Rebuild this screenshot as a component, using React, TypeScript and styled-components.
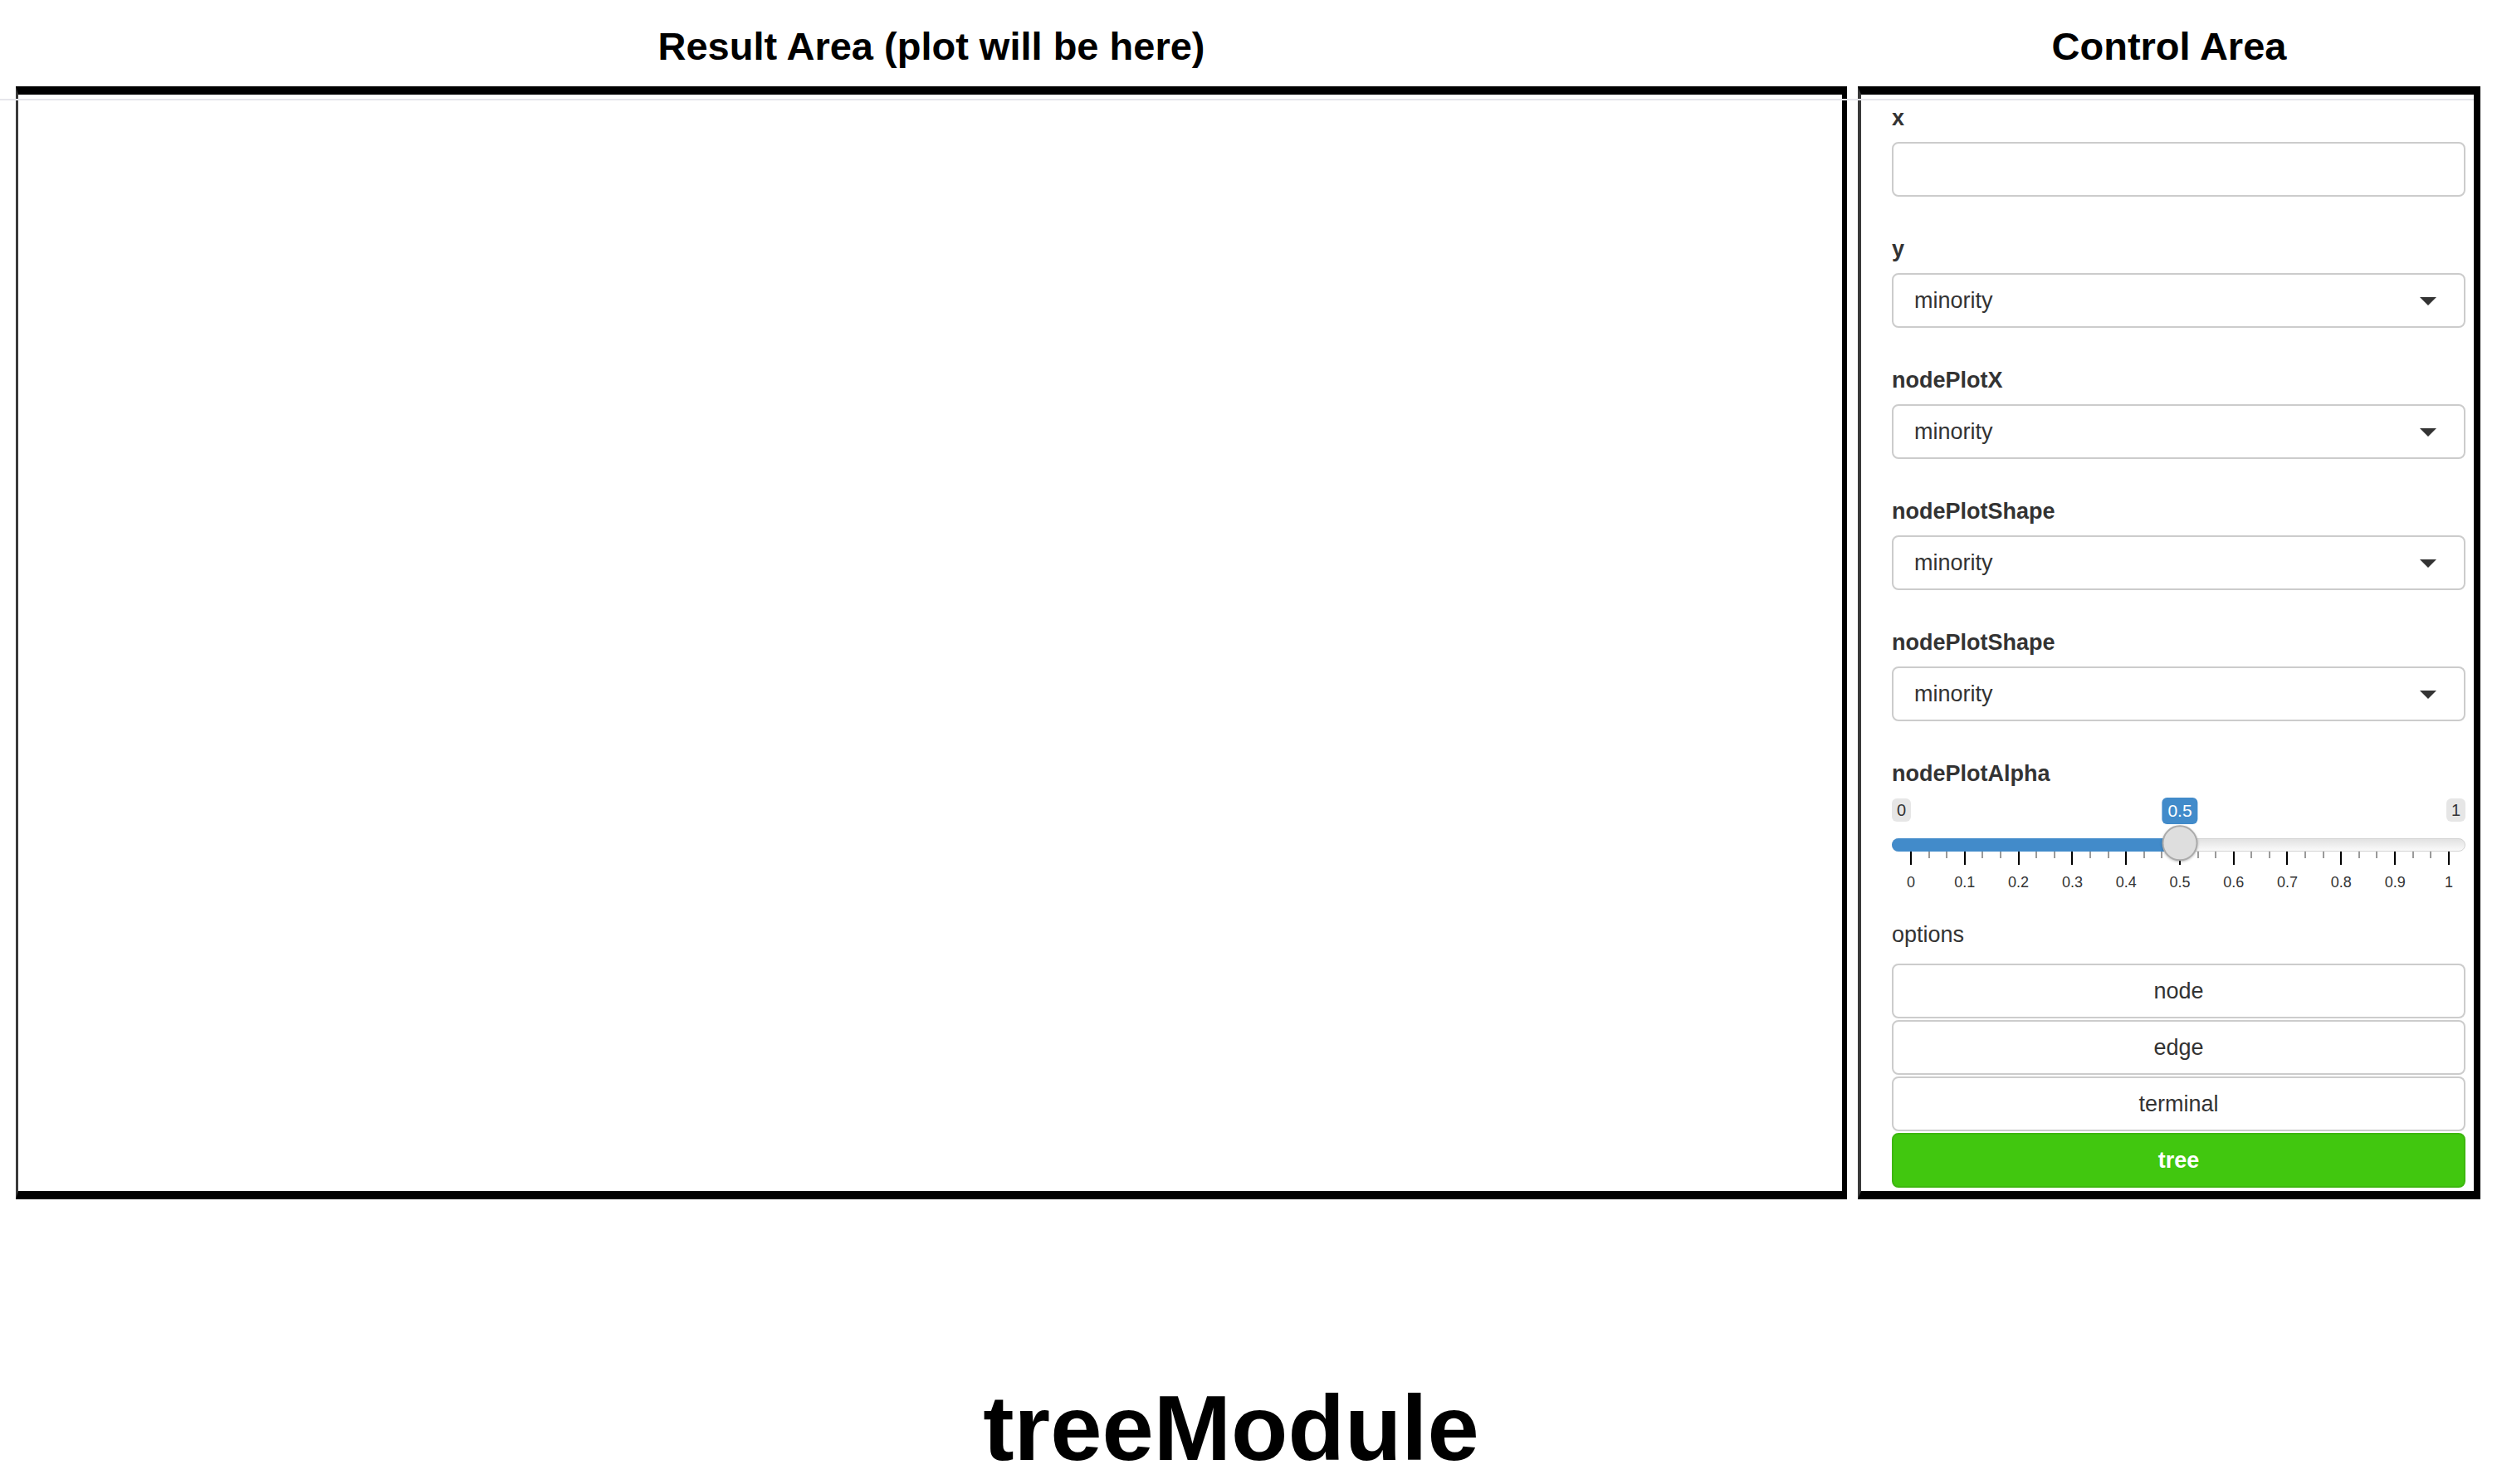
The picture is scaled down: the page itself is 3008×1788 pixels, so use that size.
import React from "react";
import styled, { createGlobalStyle } from "styled-components";

const GlobalStyle = createGlobalStyle`
  html, body {
    margin: 0;
    padding: 0;
    background: #fff;
  }
  body {
    font-family: "Liberation Sans", Arial, Helvetica, sans-serif;
    color: #333;
  }
  * {
    box-sizing: border-box;
  }
`;

const selectFields = ["y", "nodePlotX", "nodePlotShape", "nodePlotShape"];
const options = ["node", "edge", "terminal", "tree"];
const activeOption = "tree";
const alpha = 0.5;
const tickLabels = ["0", "0.1", "0.2", "0.3", "0.4", "0.5", "0.6", "0.7", "0.8", "0.9", "1"];

const Page = styled.div`
  width: 3008px;
  height: 1788px;
  display: flex;
  flex-direction: column;
  overflow: hidden;
`;

const Headers = styled.div`
  display: flex;
  gap: 13px;
  height: 104px;
  padding: 29px 20px 0 19px;
`;

const HeadTitle = styled.h3<{ $width: number }>`
  flex: 0 0 ${(p) => p.$width}px;
  margin: 0;
  text-align: center;
  font-size: 47px;
  line-height: 53px;
  font-weight: bold;
  color: #000;
`;

const Row = styled.div`
  position: relative;
  display: flex;
  gap: 13px;
  padding: 0 20px 0 19px;

  &::before {
    content: "";
    position: absolute;
    top: 15px;
    left: 0;
    right: 28px;
    height: 2px;
    background: #e6e6eb;
  }
`;

const ResultPanel = styled.section`
  flex: 0 0 2206px;
  border-style: solid;
  border-width: 10px 6px 10px 3px;
  border-color: #000 #000 #000 #3a3a3a;
`;

const ControlPanel = styled.section`
  flex: 0 0 750px;
  border-style: solid;
  border-width: 10px 8px 10px 4px;
  border-color: #000 #000 #000 #3a3a3a;
  padding: 9px 10px 4px 37px;
  display: flex;
  flex-direction: column;
`;

const Group = styled.div<{ $gap?: number }>`
  margin-bottom: ${(p) => (p.$gap === undefined ? 44 : p.$gap)}px;
`;

const Label = styled.label<{ $plain?: boolean }>`
  display: block;
  font-size: 27px;
  line-height: 38px;
  font-weight: ${(p) => (p.$plain ? "normal" : "bold")};
  margin-bottom: ${(p) => (p.$plain ? 16 : 10)}px;
  color: #333;
`;

const TextInput = styled.input`
  display: block;
  width: 100%;
  height: 66px;
  border: 2px solid #ccc;
  border-radius: 8px;
  padding: 0 25px;
  font-size: 27px;
  font-family: inherit;
  color: #333;
  outline: none;
`;

const Select = styled.div`
  display: flex;
  align-items: center;
  justify-content: space-between;
  height: 66px;
  border: 2px solid #ccc;
  border-radius: 8px;
  padding: 0 33px 0 25px;
  font-size: 27px;
  color: #333;
  background: #fff;
`;

const Caret = styled.span`
  width: 0;
  height: 0;
  border-left: 10px solid transparent;
  border-right: 10px solid transparent;
  border-top: 10px solid #333;
  margin-top: 2px;
`;

const Slider = styled.div`
  position: relative;
`;

const BadgeRow = styled.div`
  position: relative;
  display: flex;
  justify-content: space-between;
  align-items: flex-start;
  height: 32px;
`;

const Badge = styled.span<{ $value?: boolean }>`
  display: block;
  font-size: ${(p) => (p.$value ? 21 : 20)}px;
  line-height: ${(p) => (p.$value ? 28 : 26)}px;
  padding: ${(p) => (p.$value ? "2px 7px" : "1px 6px")};
  margin-top: ${(p) => (p.$value ? 0 : 1)}px;
  border-radius: 6px;
  color: ${(p) => (p.$value ? "#fff" : "#333")};
  background: ${(p) => (p.$value ? "#428bca" : "#e6e6e6")};
`;

const ValueBadge = styled(Badge)`
  position: absolute;
  top: 0;
  transform: translateX(-50%);
`;

const Track = styled.div`
  position: relative;
  margin-top: 17px;
  height: 16px;
  border: 1px solid #d2d2d2;
  border-radius: 8px;
  background: linear-gradient(to bottom, #e2e2e2, #fafafa);
`;

const Fill = styled.div`
  position: absolute;
  left: -1px;
  top: -1px;
  bottom: -1px;
  border-radius: 8px 0 0 8px;
  background: #428bca;
`;

const Handle = styled.div`
  position: absolute;
  top: 50%;
  width: 43px;
  height: 43px;
  border-radius: 50%;
  background: #dedede;
  border: 2px solid #ababab;
  box-shadow: 0 1px 3px rgba(0, 0, 0, 0.25);
  transform: translate(-50%, -55%);
`;

const Ticks = styled.div`
  display: flex;
  justify-content: space-between;
  align-items: flex-start;
  padding: 0 19px 0 22px;
  height: 16px;
`;

const Tick = styled.span<{ $major: boolean }>`
  width: 2px;
  height: ${(p) => (p.$major ? 16 : 8)}px;
  background: ${(p) => (p.$major ? "#000" : "#9a9a9a")};
`;

const TickLabels = styled.div`
  display: flex;
  justify-content: space-between;
  padding: 0 19px 0 22px;
  margin-top: 11px;
  height: 20px;
`;

const TickLabel = styled.span`
  width: 2px;
  display: flex;
  justify-content: center;
  white-space: nowrap;
  font-size: 18px;
  line-height: 20px;
  color: #333;
`;

const ButtonStack = styled.div`
  display: flex;
  flex-direction: column;
  gap: 2px;
`;

const OptionButton = styled.button<{ $active: boolean }>`
  height: 66px;
  width: 100%;
  border: 2px solid ${(p) => (p.$active ? "#3db70f" : "#ccc")};
  border-radius: 8px;
  background: ${(p) => (p.$active ? "#41c70f" : "#fff")};
  color: ${(p) => (p.$active ? "#fff" : "#333")};
  font-family: inherit;
  font-size: 27px;
  font-weight: ${(p) => (p.$active ? "bold" : "normal")};
  cursor: pointer;
`;

const Footer = styled.div`
  display: flex;
  justify-content: center;
  padding: 212px 42px 0 0;
`;

const ModuleTitle = styled.h1`
  margin: 0;
  font-size: 112px;
  line-height: 1.15;
  font-weight: bold;
  color: #000;
`;

const AlphaSlider = ({ value }: { value: number }) => {
  const pos = `calc(23px + (100% - 43px) * ${value})`;
  const ticks = Array.from({ length: 31 }, (_, i) => i);
  return (
    <Slider>
      <BadgeRow>
        <Badge>0</Badge>
        <ValueBadge $value style={{ left: pos }}>
          {value}
        </ValueBadge>
        <Badge>1</Badge>
      </BadgeRow>
      <Track>
        <Fill style={{ width: pos }} />
        <Handle style={{ left: pos }} />
      </Track>
      <Ticks>
        {ticks.map((i) => (
          <Tick key={i} $major={i % 3 === 0} />
        ))}
      </Ticks>
      <TickLabels>
        {tickLabels.map((t) => (
          <TickLabel key={t}>{t}</TickLabel>
        ))}
      </TickLabels>
    </Slider>
  );
};

const App = () => {
  return (
    <Page>
      <GlobalStyle />
      <Headers>
        <HeadTitle $width={2206}>Result Area (plot will be here)</HeadTitle>
        <HeadTitle $width={750}>Control Area</HeadTitle>
      </Headers>
      <Row>
        <ResultPanel />
        <ControlPanel>
          <Group>
            <Label>x</Label>
            <TextInput type="text" />
          </Group>
          {selectFields.map((name, i) => (
            <Group key={name + i}>
              <Label>{name}</Label>
              <Select>
                minority
                <Caret />
              </Select>
            </Group>
          ))}
          <Group $gap={34}>
            <Label>nodePlotAlpha</Label>
            <AlphaSlider value={alpha} />
          </Group>
          <Group $gap={0}>
            <Label $plain>options</Label>
            <ButtonStack>
              {options.map((o) => (
                <OptionButton key={o} $active={o === activeOption}>
                  {o}
                </OptionButton>
              ))}
            </ButtonStack>
          </Group>
        </ControlPanel>
      </Row>
      <Footer>
        <ModuleTitle>treeModule</ModuleTitle>
      </Footer>
    </Page>
  );
};

export default App;
